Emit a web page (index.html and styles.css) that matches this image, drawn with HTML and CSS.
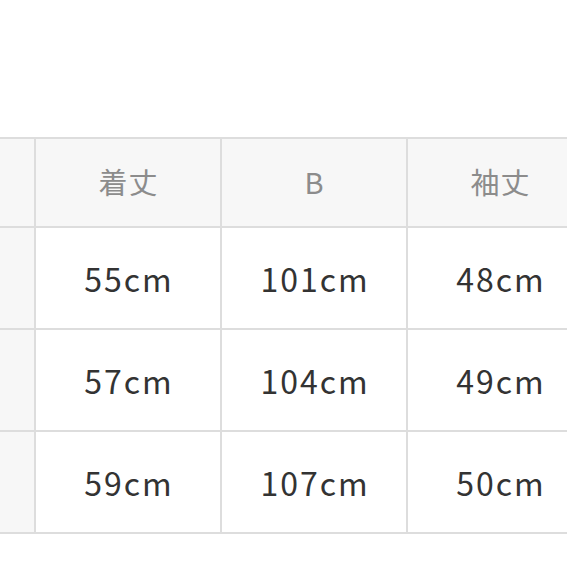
FILE: index.html
```html
<!DOCTYPE html>
<html lang="ja">
<head>
<meta charset="utf-8">
<link rel="stylesheet" href="styles.css">
</head>
<body>
<div class="page">
  <div class="table">
    <div class="cell side head"></div>
    <div class="cell head">着丈</div>
    <div class="cell head">B</div>
    <div class="cell head">袖丈</div>

    <div class="cell side"></div>
    <div class="cell">55cm</div>
    <div class="cell">101cm</div>
    <div class="cell">48cm</div>

    <div class="cell side"></div>
    <div class="cell">57cm</div>
    <div class="cell">104cm</div>
    <div class="cell">49cm</div>

    <div class="cell side"></div>
    <div class="cell">59cm</div>
    <div class="cell">107cm</div>
    <div class="cell">50cm</div>
  </div>
</div>
</body>
</html>
```
FILE: styles.css
```css
html, body {
  margin: 0;
  padding: 0;
  background: #ffffff;
  overflow: hidden;
}
.page {
  width: 567px;
  height: 567px;
  overflow: hidden;
  padding-top: 137px;
  box-sizing: border-box;
}
.table {
  display: grid;
  grid-template-columns: 34px 184px 184px 184px;
  grid-template-rows: 87px 100px 100px 100px;
  gap: 2px;
  padding: 2px 0;
  background: #dddddd;
  width: 600px;
}
.cell {
  background: #ffffff;
  display: flex;
  align-items: center;
  justify-content: center;
  font-family: "Noto Sans CJK JP", "Noto Sans", sans-serif;
  font-size: 32px;
  letter-spacing: 2px;
  text-indent: 2px;
  color: #333333;
}
.cell.head {
  background: #f7f7f7;
  color: #8c8c8c;
  font-size: 29px;
  letter-spacing: 1px;
  text-indent: 1px;
  padding-bottom: 4px;
}
.cell.side {
  background: #f7f7f7;
}
```
